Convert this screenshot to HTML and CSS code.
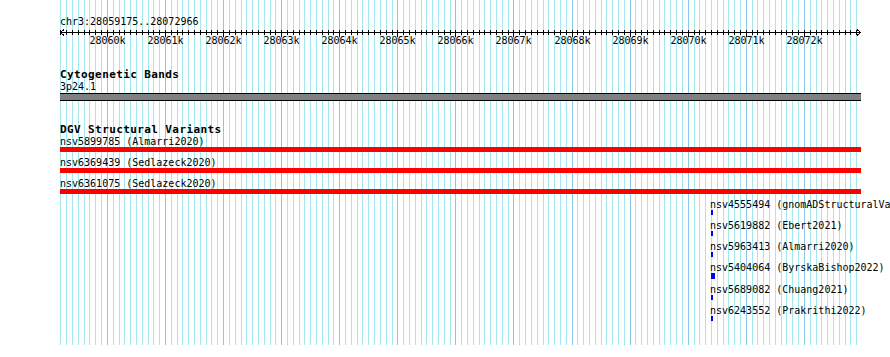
FILE: index.html
```html
<!DOCTYPE html>
<html lang="en">

<head>
    <meta charset="utf-8">
    <meta name="viewport" content="width=device-width, initial-scale=1.0">
    <title>chr3:28059175..28072966</title>
    <link rel="stylesheet" href="styles.css">
</head>

<body>
    <div class="panel">
        <svg class="grid" id="grid" width="890" height="357"></svg>

        <div class="content">
            <div class="ruler">
                <div class="seqname">chr3:28059175..28072966</div>
                <svg class="scale" id="scale" width="890" height="20"></svg>
            </div>

            <section class="track bands">
                <h2>Cytogenetic Bands</h2>
                <div class="feat">
                    <div class="label">3p24.1</div>
                    <div class="band"></div>
                </div>
            </section>

            <section class="track dgv">
                <h2>DGV Structural Variants</h2>
                <div class="feat">
                    <div class="label">nsv5899785 (Almarri2020)</div>
                    <div class="bar"></div>
                </div>
                <div class="feat">
                    <div class="label">nsv6369439 (Sedlazeck2020)</div>
                    <div class="bar"></div>
                </div>
                <div class="feat">
                    <div class="label">nsv6361075 (Sedlazeck2020)</div>
                    <div class="bar"></div>
                </div>
                <div class="feat small">
                    <div class="label">nsv4555494 (gnomADStructuralVa</div>
                    <div class="mark"></div>
                </div>
                <div class="feat small">
                    <div class="label">nsv5619882 (Ebert2021)</div>
                    <div class="mark"></div>
                </div>
                <div class="feat small">
                    <div class="label">nsv5963413 (Almarri2020)</div>
                    <div class="mark"></div>
                </div>
                <div class="feat small">
                    <div class="label">nsv5404064 (ByrskaBishop2022)</div>
                    <div class="mark wide"></div>
                </div>
                <div class="feat small">
                    <div class="label">nsv5689082 (Chuang2021)</div>
                    <div class="mark"></div>
                </div>
                <div class="feat small">
                    <div class="label">nsv6243552 (Prakrithi2022)</div>
                    <div class="mark"></div>
                </div>
            </section>
        </div>
    </div>

    <script>
        const start = 28059175;
        const end = 28072966;
        const x0 = 59;
        const w = 801;
        const ns = "http://www.w3.org/2000/svg";

        function px(bp) {
            return x0 + (bp - start) * w / (end - start);
        }

        function add(parent, tag, attrs, text) {
            let el = document.createElementNS(ns, tag);
            for (let k in attrs) {
                el.setAttribute(k, attrs[k]);
            }
            if (text) el.textContent = text;
            parent.appendChild(el);
            return el;
        }

        // grid lines every 100bp, darker every kb
        let grid = document.querySelector("#grid");
        for (let bp = 28059200; bp <= end; bp += 100) {
            let x = Math.round(px(bp)) + 0.5;
            add(grid, "line", {
                x1: x, x2: x, y1: 0, y2: 345,
                class: bp % 1000 == 0 ? "major" : "minor"
            });
        }

        // scale bar
        let scale = document.querySelector("#scale");
        add(scale, "line", { x1: 60, x2: 861, y1: 4.5, y2: 4.5, class: "axis" });
        add(scale, "polyline", { points: "64,1.5 60.5,4.5 64,7.5", class: "axis" });
        add(scale, "polyline", { points: "857,1.5 860.5,4.5 857,7.5", class: "axis" });
        for (let bp = 28059200; bp <= end; bp += 100) {
            let x = Math.round(px(bp)) + 0.5;
            let major = bp % 1000 == 0;
            add(scale, "line", { x1: x, x2: x, y1: 2, y2: major ? 9 : 7, class: "axis" });
            if (major) {
                add(scale, "text", { x: x, y: 16, class: "tick" }, (bp / 1000) + "k");
            }
        }
    </script>
</body>

</html>
```

FILE: styles.css
```css
body {
    margin: 0;
    background-color: white;
}

.panel {
    position: relative;
    width: 890px;
    height: 357px;
    overflow: hidden;
    font-family: "DejaVu Sans Mono", "Liberation Mono", monospace;
    font-size: 10px;
    color: black;
}

.grid {
    position: absolute;
    left: 0;
    top: 0;
}

.grid line {
    stroke-width: 1;
    shape-rendering: crispEdges;
}

.grid .minor {
    stroke: #a4e8ef;
}

.grid .major {
    stroke: #8cc8ea;
}

.content {
    position: relative;
    padding-top: 16px;
}

.seqname {
    padding-left: 60px;
    line-height: 12px;
    white-space: nowrap;
}

.scale {
    display: block;
}

.axis {
    stroke: black;
    stroke-width: 1;
    fill: none;
    shape-rendering: crispEdges;
}

.tick {
    font-family: "DejaVu Sans Mono", "Liberation Mono", monospace;
    font-size: 10px;
    text-anchor: middle;
    fill: black;
}

.track {
    padding-left: 60px;
}

.track h2 {
    margin: 0;
    font-size: 11px;
    font-weight: bold;
    letter-spacing: 0.4px;
    line-height: 13px;
    white-space: nowrap;
}

.bands {
    margin-top: 20px;
}

.dgv {
    margin-top: 22px;
}

.label {
    line-height: 11px;
    white-space: nowrap;
}

.band {
    width: 801px;
    height: 6px;
    margin-top: 1px;
    background-color: #808080;
    border-top: 1px solid black;
    border-bottom: 1px solid black;
}

.feat {
    margin-bottom: 5px;
}

.bar {
    width: 801px;
    height: 5px;
    background-color: red;
}

.small {
    padding-left: 650px;
}

.mark {
    width: 2px;
    height: 5px;
    margin-left: 1px;
    background-color: blue;
}

.mark.wide {
    width: 4px;
    height: 6px;
}
```
